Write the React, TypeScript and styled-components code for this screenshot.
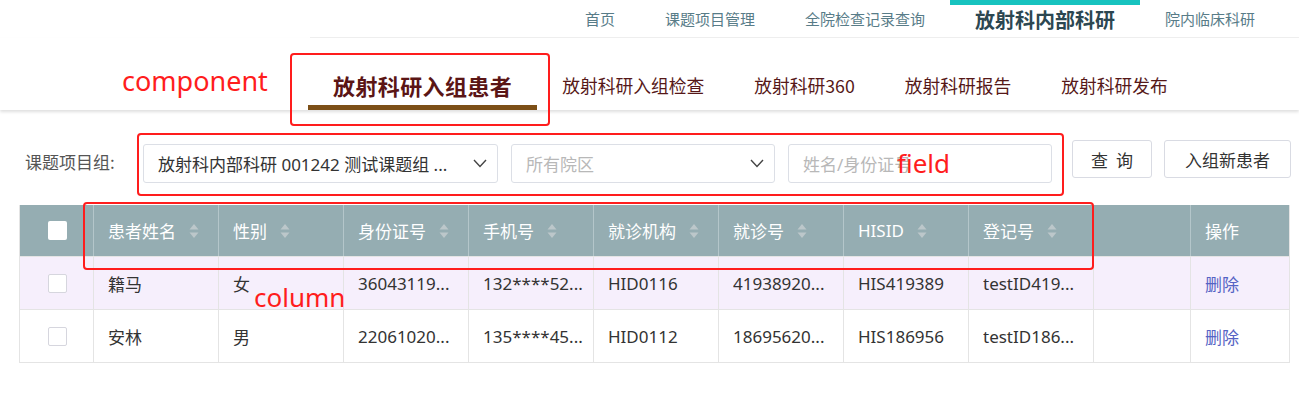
import React from "react";
import styled, { createGlobalStyle } from "styled-components";

const GlobalStyle = createGlobalStyle`
  html, body { margin: 0; padding: 0; background: #fff; }
  body { font-family: "Noto Sans", "Noto Sans CJK SC", sans-serif; color: #333; }
  * { box-sizing: border-box; }
`;

const Root = styled.div`
  position: relative;
  width: 1299px;
  height: 407px;
  overflow: hidden;
  background: #fff;
`;

const TopNav = styled.nav`
  display: flex;
  justify-content: flex-end;
  height: 38px;
  margin-left: 310px;
  padding-right: 19px;
  border-bottom: 1px solid #efefef;
`;

const NavItem = styled.a<{ $active?: boolean }>`
  display: flex;
  align-items: center;
  height: 37px;
  padding: ${(p) => (p.$active ? "2px 25px 0" : "0 25px")};
  font-family: "Noto Sans CJK SC", sans-serif;
  font-size: ${(p) => (p.$active ? "20px" : "15px")};
  font-weight: ${(p) => (p.$active ? 700 : 400)};
  color: ${(p) => (p.$active ? "#2c4751" : "#587c88")};
  box-shadow: ${(p) => (p.$active ? "inset 0 5px 0 #17c3bf" : "none")};
  white-space: nowrap;
`;

const SubNav = styled.div`
  display: flex;
  align-items: flex-end;
  height: 72px;
  padding-left: 308px;
  box-shadow: 0 2px 3px rgba(0, 0, 0, 0.13);
`;

const SubTab = styled.a<{ $active?: boolean }>`
  display: block;
  padding: 0 25px;
  line-height: 40px;
  height: 45px;
  font-family: "Noto Sans CJK SC", sans-serif;
  font-size: ${(p) => (p.$active ? "22px" : "17.75px")};
  letter-spacing: ${(p) => (p.$active ? "0.4px" : "0")};
  font-weight: ${(p) => (p.$active ? 700 : 400)};
  color: ${(p) => (p.$active ? "#5b1515" : "#561818")};
  border-bottom: 5px solid ${(p) => (p.$active ? "#7c4f17" : "transparent")};
  white-space: nowrap;
`;

const FilterRow = styled.div`
  display: flex;
  align-items: flex-start;
  margin-top: 30px;
  padding-left: 25px;
`;

const Label = styled.span`
  font-family: "Noto Sans CJK SC", sans-serif;
  font-size: 17px;
  line-height: 40px;
  margin-top: 2px;
  color: #555;
  width: 118px;
`;

const Field = styled.div<{ $w: number; $gap: number }>`
  display: flex;
  align-items: center;
  justify-content: space-between;
  width: ${(p) => p.$w}px;
  height: 39px;
  margin-top: 4px;
  margin-right: ${(p) => p.$gap}px;
  padding: 0 10px 0 14px;
  border: 1px solid #dcdfe6;
  border-radius: 3px;
  font-size: 17px;
  white-space: nowrap;
`;

const FieldText = styled.span<{ $placeholder?: boolean }>`
  color: ${(p) => (p.$placeholder ? "#b8b8b8" : "#333")};
  overflow: hidden;
`;

const Button = styled.button<{ $w: number; $gap: number }>`
  width: ${(p) => p.$w}px;
  height: 38px;
  margin-right: ${(p) => p.$gap}px;
  border: 1px solid #d9dbe3;
  border-radius: 3px;
  background: #fff;
  font-family: "Noto Sans CJK SC", sans-serif;
  font-size: 17px;
  color: #333;
  padding: 0;
  word-spacing: 4px;
`;

const Table = styled.div`
  margin: 22px 0 0 19px;
  width: 1271px;
  border-left: 1px solid #e4e4e4;
  border-right: 1px solid #e4e4e4;
`;

const Row = styled.div<{ $head?: boolean; $bg?: string }>`
  display: grid;
  grid-template-columns: 74px repeat(8, 125px) 97px 100px;
  height: ${(p) => (p.$head ? 52 : 53)}px;
  background: ${(p) => (p.$head ? "#95adb2" : p.$bg || "#fff")};
  border-bottom: 1px solid #e4e4e4;
`;

const Cell = styled.div<{ $head?: boolean; $center?: boolean; $last?: boolean }>`
  display: flex;
  align-items: center;
  justify-content: ${(p) => (p.$center ? "center" : "flex-start")};
  padding: 0 ${(p) => (p.$center ? 0 : 10)}px 0 ${(p) => (p.$center ? 0 : 14)}px;
  border-right: ${(p) =>
    p.$last ? "none" : p.$head ? "1px solid #b4c6ca" : "1px solid #e4e4e4"};
  font-size: 17px;
  color: ${(p) => (p.$head ? "#fff" : "#333")};
  white-space: nowrap;
  overflow: hidden;
`;

const CellText = styled.span`
  overflow: hidden;
  text-overflow: ellipsis;
`;

const Check = styled.span<{ $head?: boolean }>`
  display: block;
  width: 19px;
  height: 19px;
  border-radius: 2px;
  background: #fff;
  border: ${(p) => (p.$head ? "none" : "1px solid #d6d6de")};
  margin-left: 1px;
`;

const Link = styled.span`
  color: #5563c4;
`;

const SortIcon = styled.svg`
  margin-left: 13px;
  flex: none;
`;

const Annot = styled.div<{ $x: number; $y: number; $w: number; $h: number }>`
  position: absolute;
  left: ${(p) => p.$x}px;
  top: ${(p) => p.$y}px;
  width: ${(p) => p.$w}px;
  height: ${(p) => p.$h}px;
  border: 2px solid #ff1d1d;
  border-radius: 4px;
  pointer-events: none;
`;

const AnnotLabel = styled.span<{ $x: number; $y: number; $size?: number }>`
  position: absolute;
  left: ${(p) => p.$x}px;
  top: ${(p) => p.$y}px;
  font-family: "Noto Sans", sans-serif;
  font-size: ${(p) => p.$size || 26}px;
  line-height: 1;
  color: #ff1d1d;
  white-space: nowrap;
`;

const Sort = () => (
  <SortIcon width="10" height="16" viewBox="0 0 10 16">
    <path d="M5 1 L9.5 6.5 H0.5 Z" fill="#bcc7ca" />
    <path d="M5 15 L9.5 9.5 H0.5 Z" fill="#bcc7ca" />
  </SortIcon>
);

const Chevron = () => (
  <svg width="14" height="9" viewBox="0 0 14 9">
    <path d="M1 1 L7 7.5 L13 1" stroke="#444" strokeWidth="1.4" fill="none" />
  </svg>
);

const columns = ["患者姓名", "性别", "身份证号", "手机号", "就诊机构", "就诊号", "HISID", "登记号"];

const rows = [
  ["籍马", "女", "36043119...", "132****52...", "HID0116", "41938920...", "HIS419389", "testID419..."],
  ["安林", "男", "22061020...", "135****45...", "HID0112", "18695620...", "HIS186956", "testID186..."],
];

export default function App() {
  return (
    <Root>
      <GlobalStyle />
      <TopNav>
        <NavItem>首页</NavItem>
        <NavItem>课题项目管理</NavItem>
        <NavItem>全院检查记录查询</NavItem>
        <NavItem $active>放射科内部科研</NavItem>
        <NavItem>院内临床科研</NavItem>
      </TopNav>
      <SubNav>
        <SubTab $active>放射科研入组患者</SubTab>
        <SubTab>放射科研入组检查</SubTab>
        <SubTab>放射科研360</SubTab>
        <SubTab>放射科研报告</SubTab>
        <SubTab>放射科研发布</SubTab>
      </SubNav>
      <FilterRow>
        <Label>课题项目组:</Label>
        <Field $w={355} $gap={13}>
          <FieldText>放射科内部科研 001242 测试课题组 ...</FieldText>
          <Chevron />
        </Field>
        <Field $w={264} $gap={13}>
          <FieldText $placeholder>所有院区</FieldText>
          <Chevron />
        </Field>
        <Field $w={264} $gap={20}>
          <FieldText $placeholder>姓名/身份证号</FieldText>
        </Field>
        <Button $w={80} $gap={12}>查 询</Button>
        <Button $w={127} $gap={0}>入组新患者</Button>
      </FilterRow>
      <Table>
        <Row $head>
          <Cell $head $center>
            <Check $head />
          </Cell>
          {columns.map((c) => (
            <Cell $head key={c}>
              <span>{c}</span>
              <Sort />
            </Cell>
          ))}
          <Cell $head />
          <Cell $head $last>操作</Cell>
        </Row>
        {rows.map((r, i) => (
          <Row key={i} $bg={i === 0 ? "#f6effc" : "#fff"}>
            <Cell $center>
              <Check />
            </Cell>
            {r.map((v, j) => (
              <Cell key={j}>
                <CellText>{v}</CellText>
              </Cell>
            ))}
            <Cell />
            <Cell $last>
              <Link>删除</Link>
            </Cell>
          </Row>
        ))}
      </Table>

      <Annot $x={290} $y={53} $w={260} $h={73} />
      <AnnotLabel $x={122} $y={67} $size={27}>component</AnnotLabel>
      <Annot $x={137} $y={133} $w={927} $h={63} />
      <AnnotLabel $x={897} $y={150}>field</AnnotLabel>
      <Annot $x={83} $y={202} $w={1011} $h={68} />
      <AnnotLabel $x={254} $y={284}>column</AnnotLabel>
    </Root>
  );
}
